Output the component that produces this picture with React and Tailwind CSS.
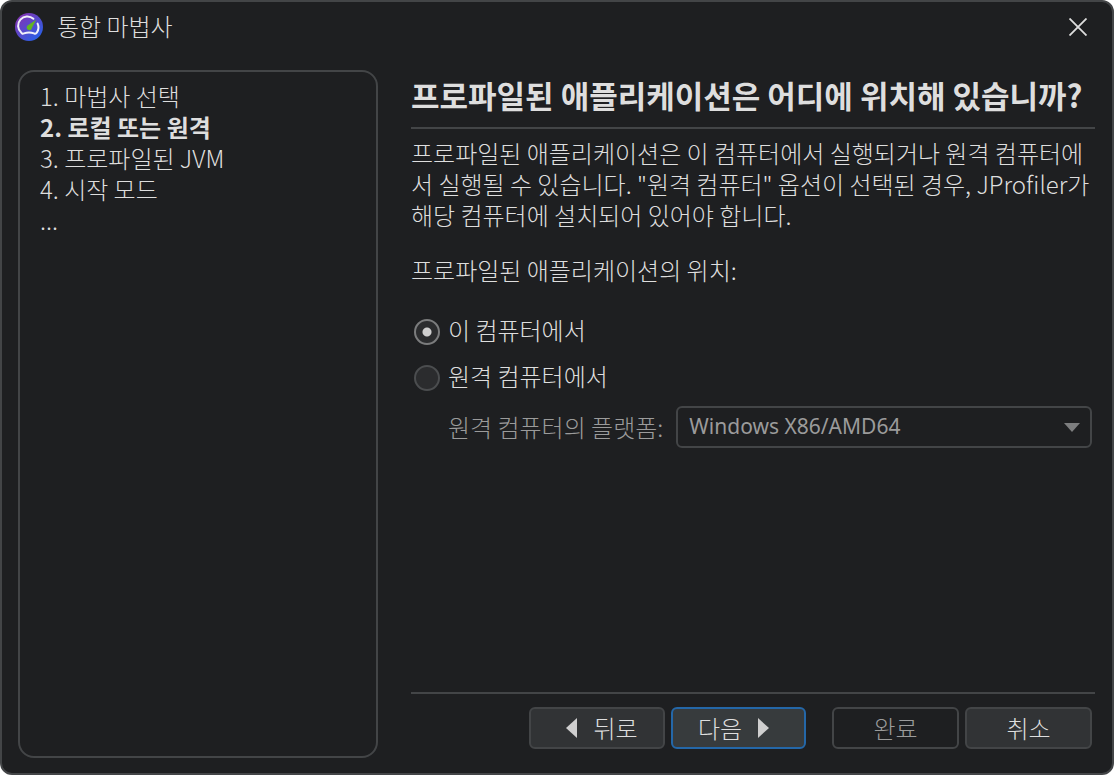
import React, { useState } from 'react';

const steps = ['마법사 선택', '로컬 또는 원격', '프로파일된 JVM', '시작 모드'];

const buttonBase = 'h-[42px] rounded-md border-2 flex items-center justify-center';

const AppLogo = () => (
  <svg viewBox="0 0 28 28" className="w-7 h-7" aria-hidden="true">
    <defs>
      <linearGradient id="logo" x1="0.15" y1="0.1" x2="0.85" y2="0.9">
        <stop offset="0" stopColor="#8134b4" />
        <stop offset="1" stopColor="#2a5fe6" />
      </linearGradient>
    </defs>
    <circle cx="14" cy="14" r="14" fill="url(#logo)" />
    <path
      d="M18.4 5.8 A9.2 9.2 0 0 0 6.2 19.6 Q7.2 21.4 9 20.4 Q14 18.4 19 20.4 Q20.8 21.4 21.8 19.6 A9.2 9.2 0 0 0 22.6 10.6"
      fill="none"
      stroke="#f0f0fa"
      strokeWidth="2"
      strokeLinecap="round"
    />
    <path d="M21.2 6.8 L17 14.8 A2.7 2.7 0 1 1 12.6 12.4 Z" fill="#62b522" />
  </svg>
);

const TitleBar = () => (
  <header className="flex items-center pt-[11px] pl-[13px] pr-[23px]">
    <AppLogo />
    <h1 className="ml-[14px] flex-1 leading-[26px] pb-0.5">통합 마법사</h1>
    <button type="button" aria-label="닫기" className="p-0.5">
      <svg viewBox="0 0 18 18" className="w-[18px] h-[18px]" aria-hidden="true">
        <path d="M0.5 0.5 L17.5 17.5 M17.5 0.5 L0.5 17.5" stroke="#dedede" strokeWidth="1.8" />
      </svg>
    </button>
  </header>
);

const StepList = ({ current }) => (
  <nav className="w-[360px] shrink-0 rounded-2xl border-2 border-[#434547] px-5 py-2">
    <ol className="leading-[31px]">
      {steps.map((step, index) => (
        <li key={step} className={index === current ? 'font-bold' : ''}>
          {index + 1}. {step}
        </li>
      ))}
      <li>...</li>
    </ol>
  </nav>
);

const LocationOption = ({ value, label, location, onChange }) => (
  <label className="flex items-center gap-2 h-[46px]">
    <input
      type="radio"
      name="location"
      value={value}
      checked={location === value}
      onChange={() => onChange(value)}
      className="appearance-none w-[26px] h-[26px] rounded-full border-2 border-[#4b4d4f] bg-[#2b2c2e] checked:border-[#7b7c7d] checked:bg-[radial-gradient(circle,#cfcfcf_4px,#2b2c2e_5px)]"
    />
    <span className="pb-1">{label}</span>
  </label>
);

const App = () => {
  const [location, setLocation] = useState('local');

  return (
    <div className="min-h-screen flex flex-col rounded-xl border-2 border-[#434547] bg-[#1e1f21] text-[#dedede] font-['Noto_Sans_CJK_KR',sans-serif] font-light text-[24px]">
      <TitleBar />
      <div className="flex-1 flex gap-[33px] pt-[29px] pl-4 pr-[17px] pb-[15px]">
        <StepList current={1} />
        <main className="flex-1 min-w-0 flex flex-col">
          <h2 className="pt-[5px] pb-3 border-b-2 border-[#434547] text-[31px] leading-[40px] font-bold whitespace-nowrap">
            프로파일된 애플리케이션은 어디에 위치해 있습니까?
          </h2>
          <p className="mt-2 leading-[31px] break-all">
            프로파일된 애플리케이션은 이 컴퓨터에서 실행되거나 원격 컴퓨터에서 실행될 수 있습니다. "원격 컴퓨터" 옵션이 선택된 경우, JProfiler가 해당 컴퓨터에 설치되어 있어야 합니다.
          </p>
          <fieldset className="mt-6">
            <legend className="leading-[31px]">프로파일된 애플리케이션의 위치:</legend>
            <div className="mt-6 pl-[3px]">
              <LocationOption value="local" label="이 컴퓨터에서" location={location} onChange={setLocation} />
              <LocationOption value="remote" label="원격 컴퓨터에서" location={location} onChange={setLocation} />
            </div>
          </fieldset>
          <div className="mt-[5px] pl-[37px] pr-[3px] flex items-center gap-[13px] text-[#9b9b9b]">
            <label htmlFor="platform" className="shrink-0">원격 컴퓨터의 플랫폼:</label>
            <div className="flex-1 min-w-0 grid items-center">
              <select
                id="platform"
                disabled={location === 'local'}
                className="col-start-1 row-start-1 appearance-none w-full h-[42px] rounded-md border-2 border-[#434547] bg-transparent pl-[11px] font-['Noto_Sans',sans-serif] font-normal text-[21px] opacity-100"
              >
                <option>Windows X86/AMD64</option>
              </select>
              <svg viewBox="0 0 16 9" className="col-start-1 row-start-1 justify-self-end mr-3 w-4 h-[9px] pointer-events-none" aria-hidden="true">
                <path d="M0 0 H16 L8 9 Z" fill="#7d7e7f" />
              </svg>
            </div>
          </div>
          <footer className="mt-auto mb-[9px] pt-[13px] pr-[3px] border-t-2 border-[#434547] flex justify-end gap-[6px]">
            <button type="button" className={`${buttonBase} w-[136px] gap-4 pl-2.5 border-[#434547] bg-[#313335]`}>
              <svg viewBox="0 0 11 20" className="w-[11px] h-5" aria-hidden="true">
                <path d="M11 0 V20 L0 10 Z" fill="#cfcfcf" />
              </svg>
              뒤로
            </button>
            <button type="button" className={`${buttonBase} w-[135px] gap-4 pr-2.5 border-[#2467a8] bg-[#373b3d]`}>
              다음
              <svg viewBox="0 0 11 20" className="w-[11px] h-5" aria-hidden="true">
                <path d="M0 0 V20 L11 10 Z" fill="#cfcfcf" />
              </svg>
            </button>
            <button type="button" disabled className={`${buttonBase} w-[127px] ml-5 border-[#434547] text-[#9b9b9b]`}>
              완료
            </button>
            <button type="button" className={`${buttonBase} w-[127px] border-[#434547] bg-[#313335]`}>
              취소
            </button>
          </footer>
        </main>
      </div>
    </div>
  );
};

export default App;
